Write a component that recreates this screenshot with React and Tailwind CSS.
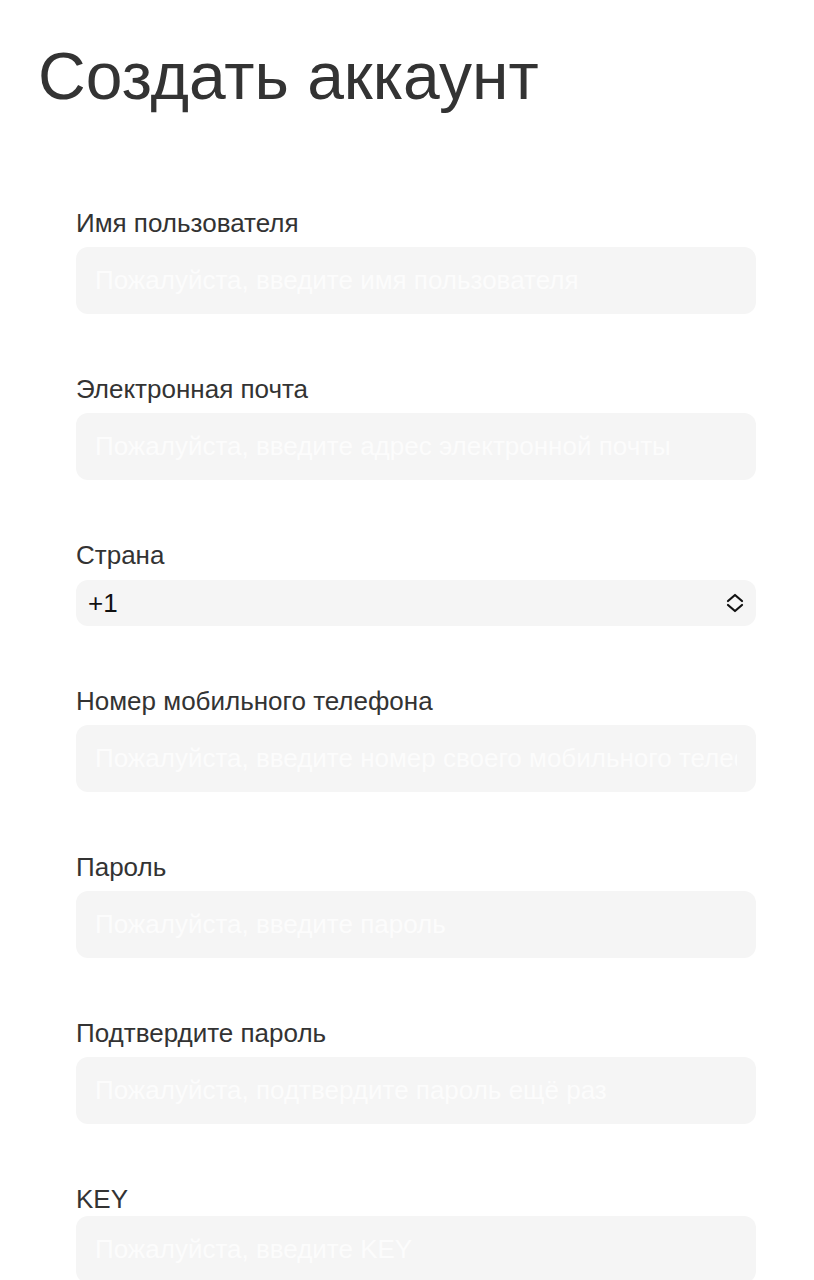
import React from 'react';

const fields = [
  { name: 'username', label: 'Имя пользователя', placeholder: 'Пожалуйста, введите имя пользователя' },
  { name: 'email', label: 'Электронная почта', placeholder: 'Пожалуйста, введите адрес электронной почты' },
  { name: 'country', label: 'Страна', select: true },
  { name: 'phone', label: 'Номер мобильного телефона', placeholder: 'Пожалуйста, введите номер своего мобильного телефона' },
  { name: 'password', label: 'Пароль', placeholder: 'Пожалуйста, введите пароль', type: 'password' },
  { name: 'confirm', label: 'Подтвердите пароль', placeholder: 'Пожалуйста, подтвердите пароль ещё раз', type: 'password' },
  { name: 'key', label: 'KEY', placeholder: 'Пожалуйста, введите KEY', tight: true },
];

const SelectArrows = () => (
  <svg width="18" height="20" viewBox="0 0 18 20" fill="none" stroke="#111" strokeWidth="2.2" strokeLinecap="round" strokeLinejoin="round">
    <path d="M2 8 9 2l7 6" />
    <path d="M2 12l7 6 7-6" />
  </svg>
);

const App = () => {
  return (
    <div className="min-h-screen bg-white text-[#333] font-['Liberation_Sans',Arial,sans-serif]">
      <h1 className="pl-[38px] pt-[43px] text-[66px] leading-none font-normal">Создать аккаунт</h1>

      <form className="ml-[76px] w-[680px] mt-[100px] flex flex-col gap-[61px]">
        {fields.map((field) => (
          <div key={field.name} className="flex flex-col">
            <label className="text-[26px] leading-[28px]">{field.label}</label>
            {field.select ? (
              <div className="relative mt-[11px]">
                <select className="w-full h-[46px] appearance-none rounded-[12px] bg-[#f5f5f5] pl-[12px] text-[26px] text-[#111] outline-none">
                  <option>+1</option>
                </select>
                <span className="pointer-events-none absolute right-[12px] top-[13px]">
                  <SelectArrows />
                </span>
              </div>
            ) : (
              <input
                type={field.type || 'text'}
                placeholder={field.placeholder}
                className={`${field.tight ? 'mt-[3px]' : 'mt-[10px]'} h-[67px] w-full rounded-[12px] bg-[#f5f5f5] px-[19px] text-[26px] outline-none placeholder:text-[#fcfcfc]`}
              />
            )}
          </div>
        ))}
      </form>
    </div>
  );
};

export default App;
